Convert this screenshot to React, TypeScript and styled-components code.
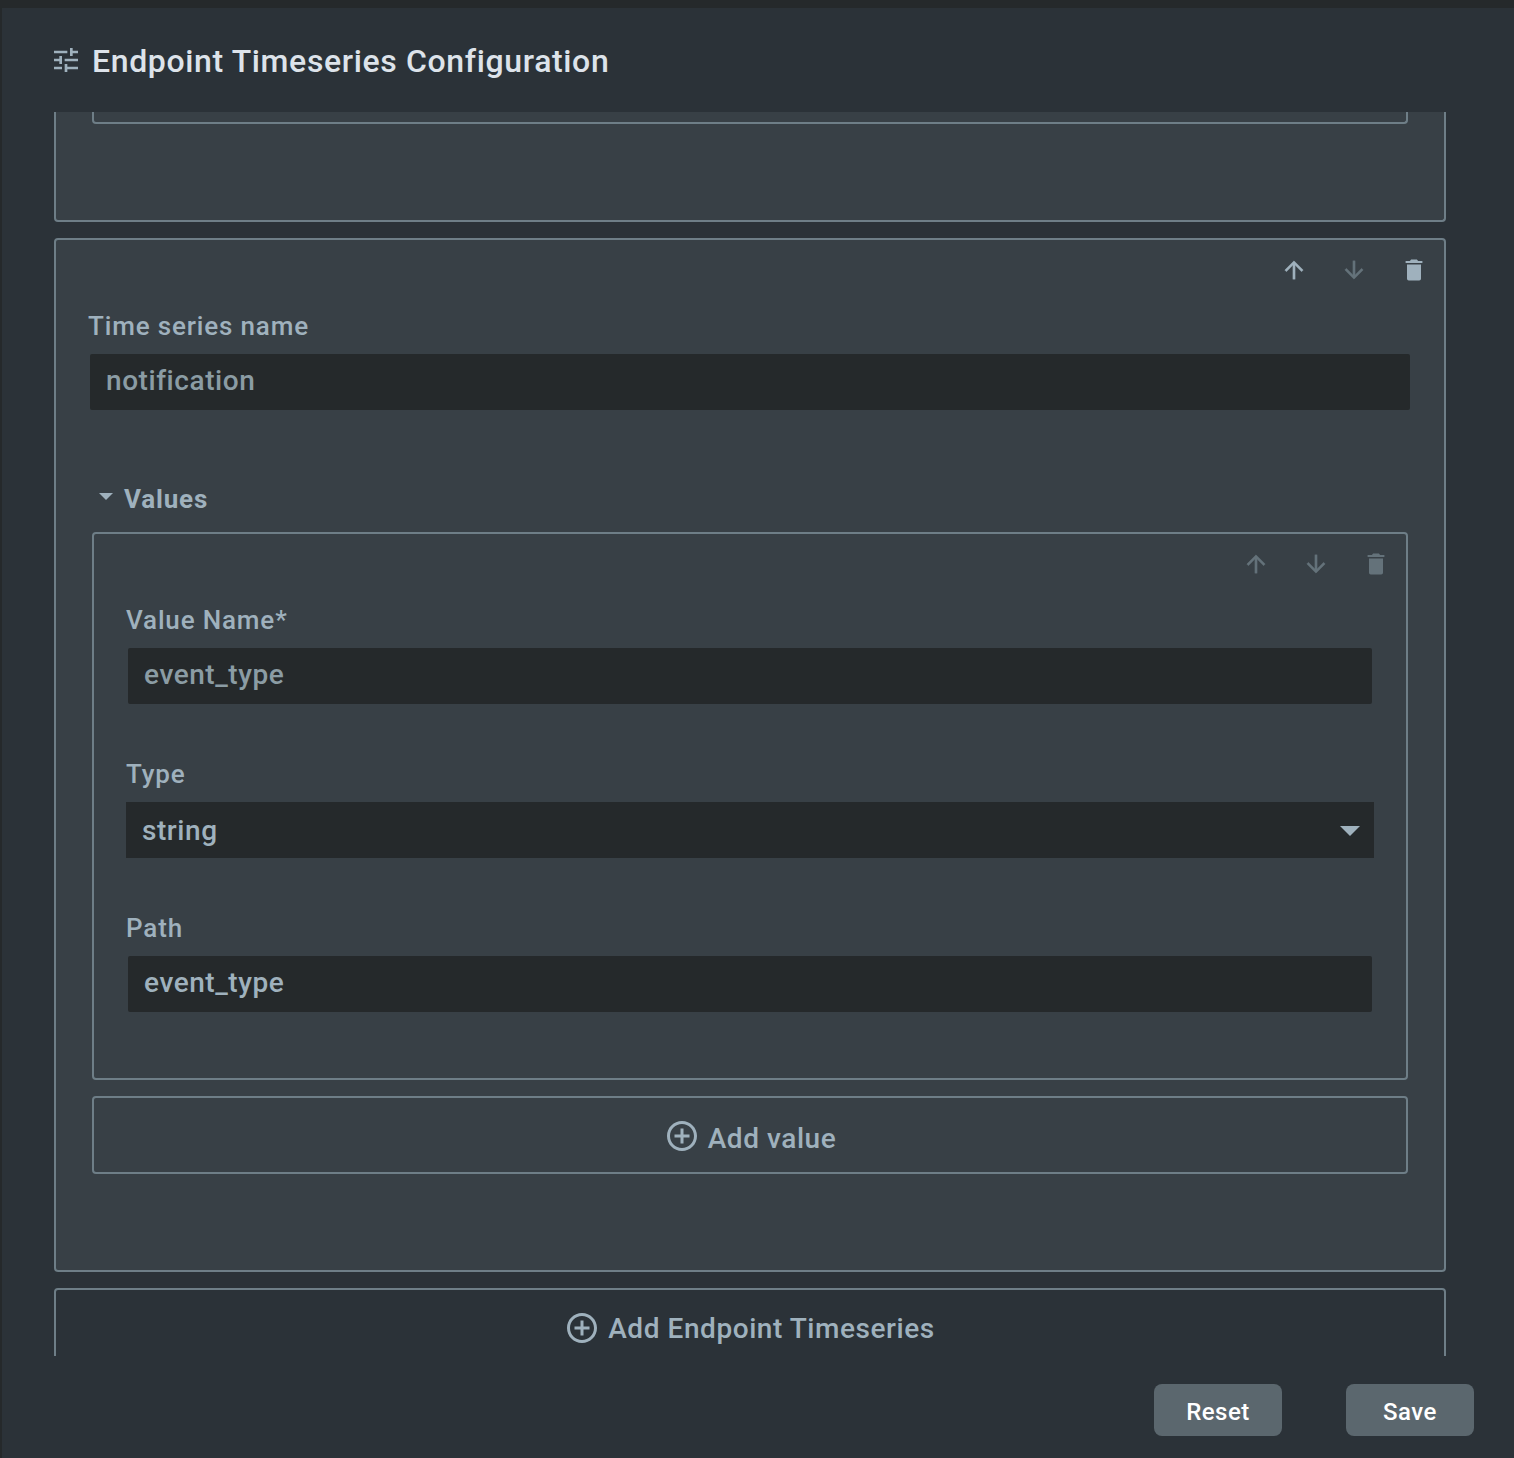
import React from "react";
import styled, { createGlobalStyle, css } from "styled-components";

const color = {
  frame: "#25292b",
  page: "#2b3238",
  card: "#384046",
  border: "#6e7e87",
  input: "#25292b",
  text: "#9fb1bd",
  muted: "#8b9ca4",
  title: "#dde3ea",
  button: "#5b676e",
};

const GlobalStyle = createGlobalStyle`
  *, *::before, *::after { box-sizing: border-box; }
  body {
    margin: 0;
    background: ${color.frame};
    font-family: Roboto, "Liberation Sans", sans-serif;
    font-weight: 500;
    color: ${color.text};
    overflow: hidden;
  }
  svg { display: block; flex: none; fill: currentColor; }
`;

const Frame = styled.div`
  height: 1458px;
  padding: 8px 0 0 2px;
  background: ${color.frame};
`;

const Dialog = styled.main`
  display: flex;
  flex-direction: column;
  height: 100%;
  background: ${color.page};
`;

const Header = styled.header`
  display: flex;
  align-items: center;
  gap: 10px;
  flex: none;
  height: 104px;
  padding: 0 48px;
`;

const Title = styled.h1`
  margin: 2px 0 0;
  font-size: 32px;
  font-weight: 500;
  line-height: 40px;
  letter-spacing: 0.64px;
  color: ${color.title};
  white-space: nowrap;
`;

const ScrollArea = styled.section`
  display: flex;
  flex-direction: column;
  gap: 16px;
  flex: none;
  height: 1244px;
  padding: 0 68px 0 52px;
  overflow: hidden;
`;

const outline = css`
  border: 2px solid ${color.border};
  border-radius: 4px;
`;

const Card = styled.article`
  ${outline}
  flex: none;
  background: ${color.card};
`;

const CardTail = styled(Card)`
  height: 110px;
  padding: 0 36px;
  border-top: 0;
  border-radius: 0 0 4px 4px;
`;

const BoxTail = styled.div`
  ${outline}
  height: 12px;
  border-top: 0;
  border-radius: 0 0 4px 4px;
`;

const Toolbar = styled.div`
  display: flex;
  justify-content: flex-end;
  height: 60px;
`;

const IconButton = styled.button`
  display: grid;
  place-items: center;
  width: 60px;
  height: 60px;
  padding: 0;
  border: 0;
  background: none;
  color: ${color.text};
  &:disabled { color: #64727a; }
`;

const CardBody = styled.div<{ $bottom: number }>`
  padding: 10px 32px ${(p) => p.$bottom}px;
`;

const Fields = styled.div`
  display: flex;
  flex-direction: column;
  gap: 54px;
`;

const FieldBlock = styled.div`
  display: flex;
  flex-direction: column;
  gap: 12px;
`;

const Label = styled.label`
  font-size: 26px;
  line-height: 32px;
  letter-spacing: 0.84px;
`;

const TextBox = styled.div<{ $muted?: boolean }>`
  height: 56px;
  margin: 0 2px;
  padding: 0 16px;
  border-radius: 2px;
  background: ${color.input};
  color: ${(p) => (p.$muted ? color.muted : color.text)};
  font-size: 28px;
  line-height: 53px;
  letter-spacing: 0.56px;
`;

const SelectBox = styled.div`
  display: flex;
  align-items: center;
  justify-content: space-between;
  height: 56px;
  padding: 2px 14px 0 16px;
  background: ${color.input};
  font-size: 28px;
  line-height: 36px;
  letter-spacing: 0.56px;
`;

const Group = styled.section`
  display: flex;
  flex-direction: column;
  margin: 73px 4px 0;
`;

const GroupHeader = styled.h2`
  display: flex;
  align-items: center;
  gap: 11px;
  margin: 0 0 17px;
  padding-left: 7px;
  font-size: 26px;
  font-weight: 700;
  line-height: 32px;
  letter-spacing: 0.84px;
  svg { margin-bottom: 5px; }
`;

const AddButton = styled.button<{ $drop: number; $inset?: number }>`
  ${outline}
  display: flex;
  align-items: center;
  justify-content: center;
  gap: 8px;
  flex: none;
  height: 78px;
  padding: 2px ${(p) => p.$inset ?? 0}px 0 0;
  background: none;
  color: inherit;
  font: 500 28px/36px Roboto, "Liberation Sans", sans-serif;
  letter-spacing: 0.56px;
  span { padding-top: ${(p) => p.$drop}px; }
`;

const Spaced = styled.div`
  display: grid;
  margin-top: 16px;
`;

const Footer = styled.footer`
  display: flex;
  justify-content: flex-end;
  gap: 64px;
  padding: 28px 40px 0;
`;

const ActionButton = styled.button`
  width: 128px;
  height: 52px;
  padding: 4px 0 0;
  border: 0;
  border-radius: 8px;
  background: ${color.button};
  color: #fff;
  font: 500 24px/32px Roboto, "Liberation Sans", sans-serif;
  letter-spacing: 0.5px;
`;

const TuneIcon = () => (
  <svg width="32" height="32" viewBox="0 0 24 24">
    <path d="M3 17v2h6v-2H3zM3 5v2h10V5H3zm10 16v-2h8v-2h-8v-2h-2v6h2zM7 9v2H3v2h4v2h2V9H7zm14 4v-2H11v2h10zm-6-4h2V7h4V5h-4V3h-2v6z" />
  </svg>
);

const ArrowIcon = ({ down }: { down?: boolean }) => (
  <svg width="28" height="28" viewBox="0 0 24 24" stroke="currentColor" strokeWidth="0.25">
    <path
      transform={down ? "rotate(180 12 12)" : undefined}
      d="M13,20H11V8L5.5,13.5L4.08,12.08L12,4.16L19.92,12.08L18.5,13.5L13,8V20Z"
    />
  </svg>
);

const TrashIcon = () => (
  <svg width="28" height="28" viewBox="0 0 24 24">
    <path d="M19.2,4.3H15.5L14.5,3H9.5L8.5,4.3H4.8V6H19.2M6,19.6A1.5,1.5 0 0,0 7.5,21.1H16.5A1.5,1.5 0 0,0 18,19.6V7.2H6Z" />
  </svg>
);

const PlusCircleIcon = () => (
  <svg width="36" height="36" viewBox="0 0 24 24">
    <path d="M13 7h-2v4H7v2h4v4h2v-4h4v-2h-4V7zm-1-5C6.48 2 2 6.48 2 12s4.48 10 10 10 10-4.48 10-10S17.52 2 12 2zm0 18c-4.41 0-8-3.59-8-8s3.59-8 8-8 8 3.59 8 8-3.59 8-8 8z" />
  </svg>
);

const Caret = ({ size }: { size: number }) => (
  <svg width={size} height={size / 2} viewBox="0 0 20 10">
    <path d="M0 0h20L10 10z" />
  </svg>
);

const Actions = ({ up, down, remove }: { up?: boolean; down?: boolean; remove?: boolean }) => (
  <Toolbar>
    <IconButton disabled={!up} aria-label="Move up"><ArrowIcon /></IconButton>
    <IconButton disabled={!down} aria-label="Move down"><ArrowIcon down /></IconButton>
    <IconButton disabled={!remove} aria-label="Delete"><TrashIcon /></IconButton>
  </Toolbar>
);

const TextField = ({ label, value, muted }: { label: string; value: string; muted?: boolean }) => (
  <FieldBlock>
    <Label>{label}</Label>
    <TextBox $muted={muted}>{value}</TextBox>
  </FieldBlock>
);

const SelectField = ({ label, value }: { label: string; value: string }) => (
  <FieldBlock>
    <Label>{label}</Label>
    <SelectBox>
      <span>{value}</span>
      <Caret size={20} />
    </SelectBox>
  </FieldBlock>
);

export default function App() {
  return (
    <>
      <GlobalStyle />
      <Frame>
        <Dialog>
          <Header>
            <TuneIcon />
            <Title>Endpoint Timeseries Configuration</Title>
          </Header>
          <ScrollArea>
            <CardTail>
              <BoxTail />
            </CardTail>
            <Card>
              <Actions up remove />
              <CardBody $bottom={96}>
                <TextField label="Time series name" value="notification" muted />
                <Group>
                  <GroupHeader>
                    <Caret size={14} />
                    <span>Values</span>
                  </GroupHeader>
                  <Card>
                    <Actions />
                    <CardBody $bottom={66}>
                      <Fields>
                        <TextField label="Value Name*" value="event_type" muted />
                        <SelectField label="Type" value="string" />
                        <TextField label="Path" value="event_type" />
                      </Fields>
                    </CardBody>
                  </Card>
                  <Spaced>
                    <AddButton $drop={5}>
                      <PlusCircleIcon />
                      <span>Add value</span>
                    </AddButton>
                  </Spaced>
                </Group>
              </CardBody>
            </Card>
            <AddButton $drop={1} $inset={1}>
              <PlusCircleIcon />
              <span>Add Endpoint Timeseries</span>
            </AddButton>
          </ScrollArea>
          <Footer>
            <ActionButton>Reset</ActionButton>
            <ActionButton>Save</ActionButton>
          </Footer>
        </Dialog>
      </Frame>
    </>
  );
}
